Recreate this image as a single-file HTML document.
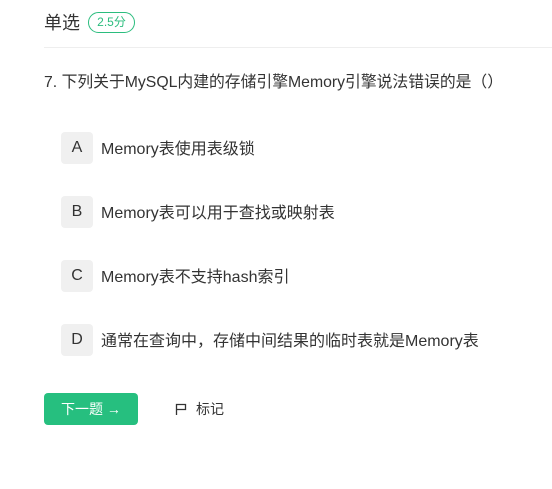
<!DOCTYPE html>
<html><head><meta charset="utf-8"><style>
body{margin:0;width:552px;height:489px;background:#fff;font-family:"Liberation Sans","Noto Sans CJK SC",sans-serif;color:#333;position:relative;overflow:hidden}
.a{position:absolute;white-space:nowrap}
.title{left:44px;top:11px;font-size:18px;line-height:24px;color:#333}
.badge{left:88px;top:12px;width:45px;height:19px;border:1px solid #2bbd7e;border-radius:11px;color:#2bbd7e;font-size:12px;line-height:19px;text-align:center}
.hr{left:44px;top:47px;width:508px;height:1px;background:#eee}
.q{left:44px;top:73px;font-size:15.8px;line-height:20px;color:#333}
.box{left:61px;width:32px;height:32px;background:#f0f0f0;border-radius:4px;font-size:16px;line-height:32px;text-align:center;color:#333}
.opt{left:101px;font-size:16px;line-height:32px;color:#333;margin-top:2px}
.btn{left:44px;top:393px;width:94px;height:32px;background:#26bf7f;border-radius:4px;color:#fff;font-size:14px;line-height:32px;text-align:center}
.mark{left:196px;top:393px;font-size:14px;line-height:32px;color:#333}
</style></head><body>
<div class="a title">单选</div>
<div class="a badge">2.5分</div>
<div class="a hr"></div>
<div class="a q">7. 下列关于MySQL内建的存储引擎Memory引擎说法错误的是（）</div>
<div class="a box" style="top:132px">A</div><div class="a opt" style="top:132px">Memory表使用表级锁</div>
<div class="a box" style="top:196px">B</div><div class="a opt" style="top:196px">Memory表可以用于查找或映射表</div>
<div class="a box" style="top:260px">C</div><div class="a opt" style="top:260px">Memory表不支持hash索引</div>
<div class="a box" style="top:324px">D</div><div class="a opt" style="top:324px">通常在查询中，存储中间结果的临时表就是Memory表</div>
<div class="a btn">下一题 →</div>
<svg class="a" style="left:175px;top:403px" width="12" height="12" viewBox="0 0 12 12"><path d="M1.5 12V1.5H10.5V6.5H1.5" fill="none" stroke="#333" stroke-width="1.3"/></svg>
<div class="a mark">标记</div>
</body></html>
